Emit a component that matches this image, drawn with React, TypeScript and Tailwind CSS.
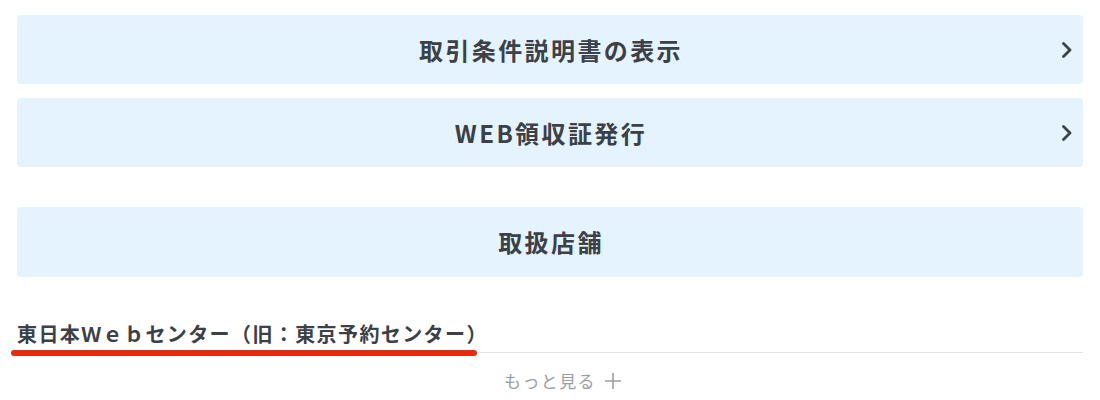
import React from "react";

const font = { fontFamily: '"Noto Sans CJK JP", "Noto Sans", sans-serif' };

function Chevron() {
  return (
    <svg width="12" height="16" viewBox="0 0 12 16" fill="none" className="text-[#3c4047]">
      <polyline points="2.5,1.5 9,8 2.5,14.5" stroke="currentColor" strokeWidth="2.8" strokeLinecap="round" strokeLinejoin="round" />
    </svg>
  );
}

function MenuButton({ label, arrow = true, tall = false }: { label: string; arrow?: boolean; tall?: boolean }) {
  return (
    <div
      className={`grid grid-cols-[1fr_auto_1fr] items-center rounded-[4px] bg-[#e4f3fd] ${
        tall ? "h-[70px]" : "h-[69px]"
      }`}
    >
      <span />
      <span className="pl-[2px] text-[24px] font-bold tracking-[0.1em] text-[#3c4047]">{label}</span>
      <span className="flex justify-end pr-[10px]">{arrow && <Chevron />}</span>
    </div>
  );
}

export default function App() {
  return (
    <div className="h-[400px] w-[1100px] bg-white px-[17px] pt-[15px]" style={font}>
      <MenuButton label="取引条件説明書の表示" />
      <div className="mt-[14px]">
        <MenuButton label="WEB領収証発行" />
      </div>
      <div className="mt-[40px]">
        <MenuButton label="取扱店舗" arrow={false} tall />
      </div>

      <div className="mt-[43px] border-b border-[#e3e3e3] pb-[4px]">
        <h2 className="relative inline-block text-[20px] font-bold leading-[28px] tracking-[0.07em] text-[#3c4047]">
          東日本Ｗｅｂセンター（旧：東京予約センター）
          <span className="absolute bottom-[-8px] left-[-6px] h-[6px] w-[466px] rounded-full bg-[#e62a0f]" />
        </h2>
      </div>

      <div className="mt-[16px] flex justify-center">
        <span className="relative text-[17px] leading-[24px] tracking-[0.08em] text-[#9a9da3]">
          もっと見る
          <svg width="18" height="18" viewBox="0 0 18 18" className="absolute left-[calc(100%+8px)] top-[3px]">
            <path d="M9 1v16M1 9h16" stroke="#9a9da3" strokeWidth="1.6" />
          </svg>
        </span>
      </div>
    </div>
  );
}
